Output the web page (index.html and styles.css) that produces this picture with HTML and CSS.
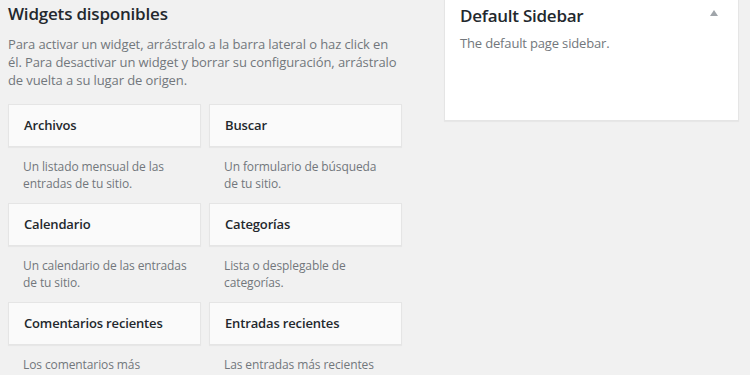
FILE: index.html
```html
<!DOCTYPE html>
<html>
<head>
    <title>Widgets</title>
    <meta charset="utf-8">
    <link rel="stylesheet" href="styles.css">
</head>
<body>
    <div class="wrap">
        <div class="available">
            <h3 class="section-title">Widgets disponibles</h3>
            <p class="section-help">Para activar un widget, arrástralo a la barra lateral o haz click en él. Para desactivar un widget y borrar su configuración, arrástralo de vuelta a su lugar de origen.</p>
            <div class="widget-list">
                <div class="widget">
                    <div class="widget-top">Archivos</div>
                    <div class="widget-desc">Un listado mensual de las entradas de tu sitio.</div>
                </div>
                <div class="widget">
                    <div class="widget-top">Buscar</div>
                    <div class="widget-desc">Un formulario de búsqueda de tu sitio.</div>
                </div>
                <div class="widget">
                    <div class="widget-top">Calendario</div>
                    <div class="widget-desc">Un calendario de las entradas de tu sitio.</div>
                </div>
                <div class="widget">
                    <div class="widget-top">Categorías</div>
                    <div class="widget-desc">Lista o desplegable de categorías.</div>
                </div>
                <div class="widget">
                    <div class="widget-top">Comentarios recientes</div>
                    <div class="widget-desc">Los comentarios más recientes de tu sitio.</div>
                </div>
                <div class="widget">
                    <div class="widget-top">Entradas recientes</div>
                    <div class="widget-desc">Las entradas más recientes de tu sitio.</div>
                </div>
            </div>
        </div>
        <div class="sidebars">
            <div class="sidebar-box">
                <div class="sidebar-head">
                    <h3 class="sidebar-name">Default Sidebar</h3>
                    <span class="toggle-arrow"></span>
                </div>
                <p class="sidebar-desc">The default page sidebar.</p>
            </div>
        </div>
    </div>
</body>
</html>
```

FILE: styles.css
```css
body {
    margin: 0;
    background: #f1f1f1;
    font-family: "Open Sans", "Noto Sans", sans-serif;
    color: #23282d;
    overflow: hidden;
}
.wrap {
    display: flex;
    gap: 42px;
    padding: 0 11px 0 8px;
}
.available {
    width: 394px;
}
.section-title {
    margin: 0;
    padding-top: 1px;
    font-size: 17px;
    font-weight: 600;
    letter-spacing: -0.2px;
    line-height: 26px;
}
.section-help {
    margin: 8px 0 0;
    font-size: 13px;
    letter-spacing: -0.1px;
    line-height: 18.2px;
    color: #72777c;
}
.widget-list {
    display: grid;
    grid-template-columns: 193px 193px;
    column-gap: 8px;
    margin-top: 14px;
}
.widget {
    height: 99px;
}
.widget-top {
    height: 43px;
    box-sizing: border-box;
    padding: 0 15px;
    line-height: 41px;
    font-size: 13px;
    font-weight: 600;
    letter-spacing: -0.15px;
    background: #fafafa;
    border: 1px solid #e5e5e5;
    box-shadow: 0 1px 1px rgba(0, 0, 0, 0.04);
}
.widget-desc {
    padding: 11px 12px 0 15px;
    font-size: 12px;
    letter-spacing: -0.1px;
    line-height: 17px;
    color: #72777c;
}
.sidebars {
    flex: 1;
}
.sidebar-box {
    margin-top: -1px;
    height: 122px;
    box-sizing: border-box;
    background: #fff;
    border: 1px solid #e5e5e5;
    box-shadow: 0 1px 1px rgba(0, 0, 0, 0.04);
    padding: 0 15px;
}
.sidebar-head {
    display: flex;
    justify-content: space-between;
    align-items: center;
    padding-top: 3px;
}
.sidebar-name {
    margin: 0;
    font-size: 17px;
    font-weight: 600;
    letter-spacing: -0.25px;
    line-height: 26px;
}
.toggle-arrow {
    width: 0;
    height: 0;
    margin-right: 5px;
    margin-bottom: 6px;
    border-left: 4px solid transparent;
    border-right: 4px solid transparent;
    border-bottom: 6px solid #a0a5aa;
}
.sidebar-desc {
    margin: 5px 0 0;
    font-size: 13px;
    letter-spacing: -0.16px;
    line-height: 18px;
    color: #72777c;
}
```
